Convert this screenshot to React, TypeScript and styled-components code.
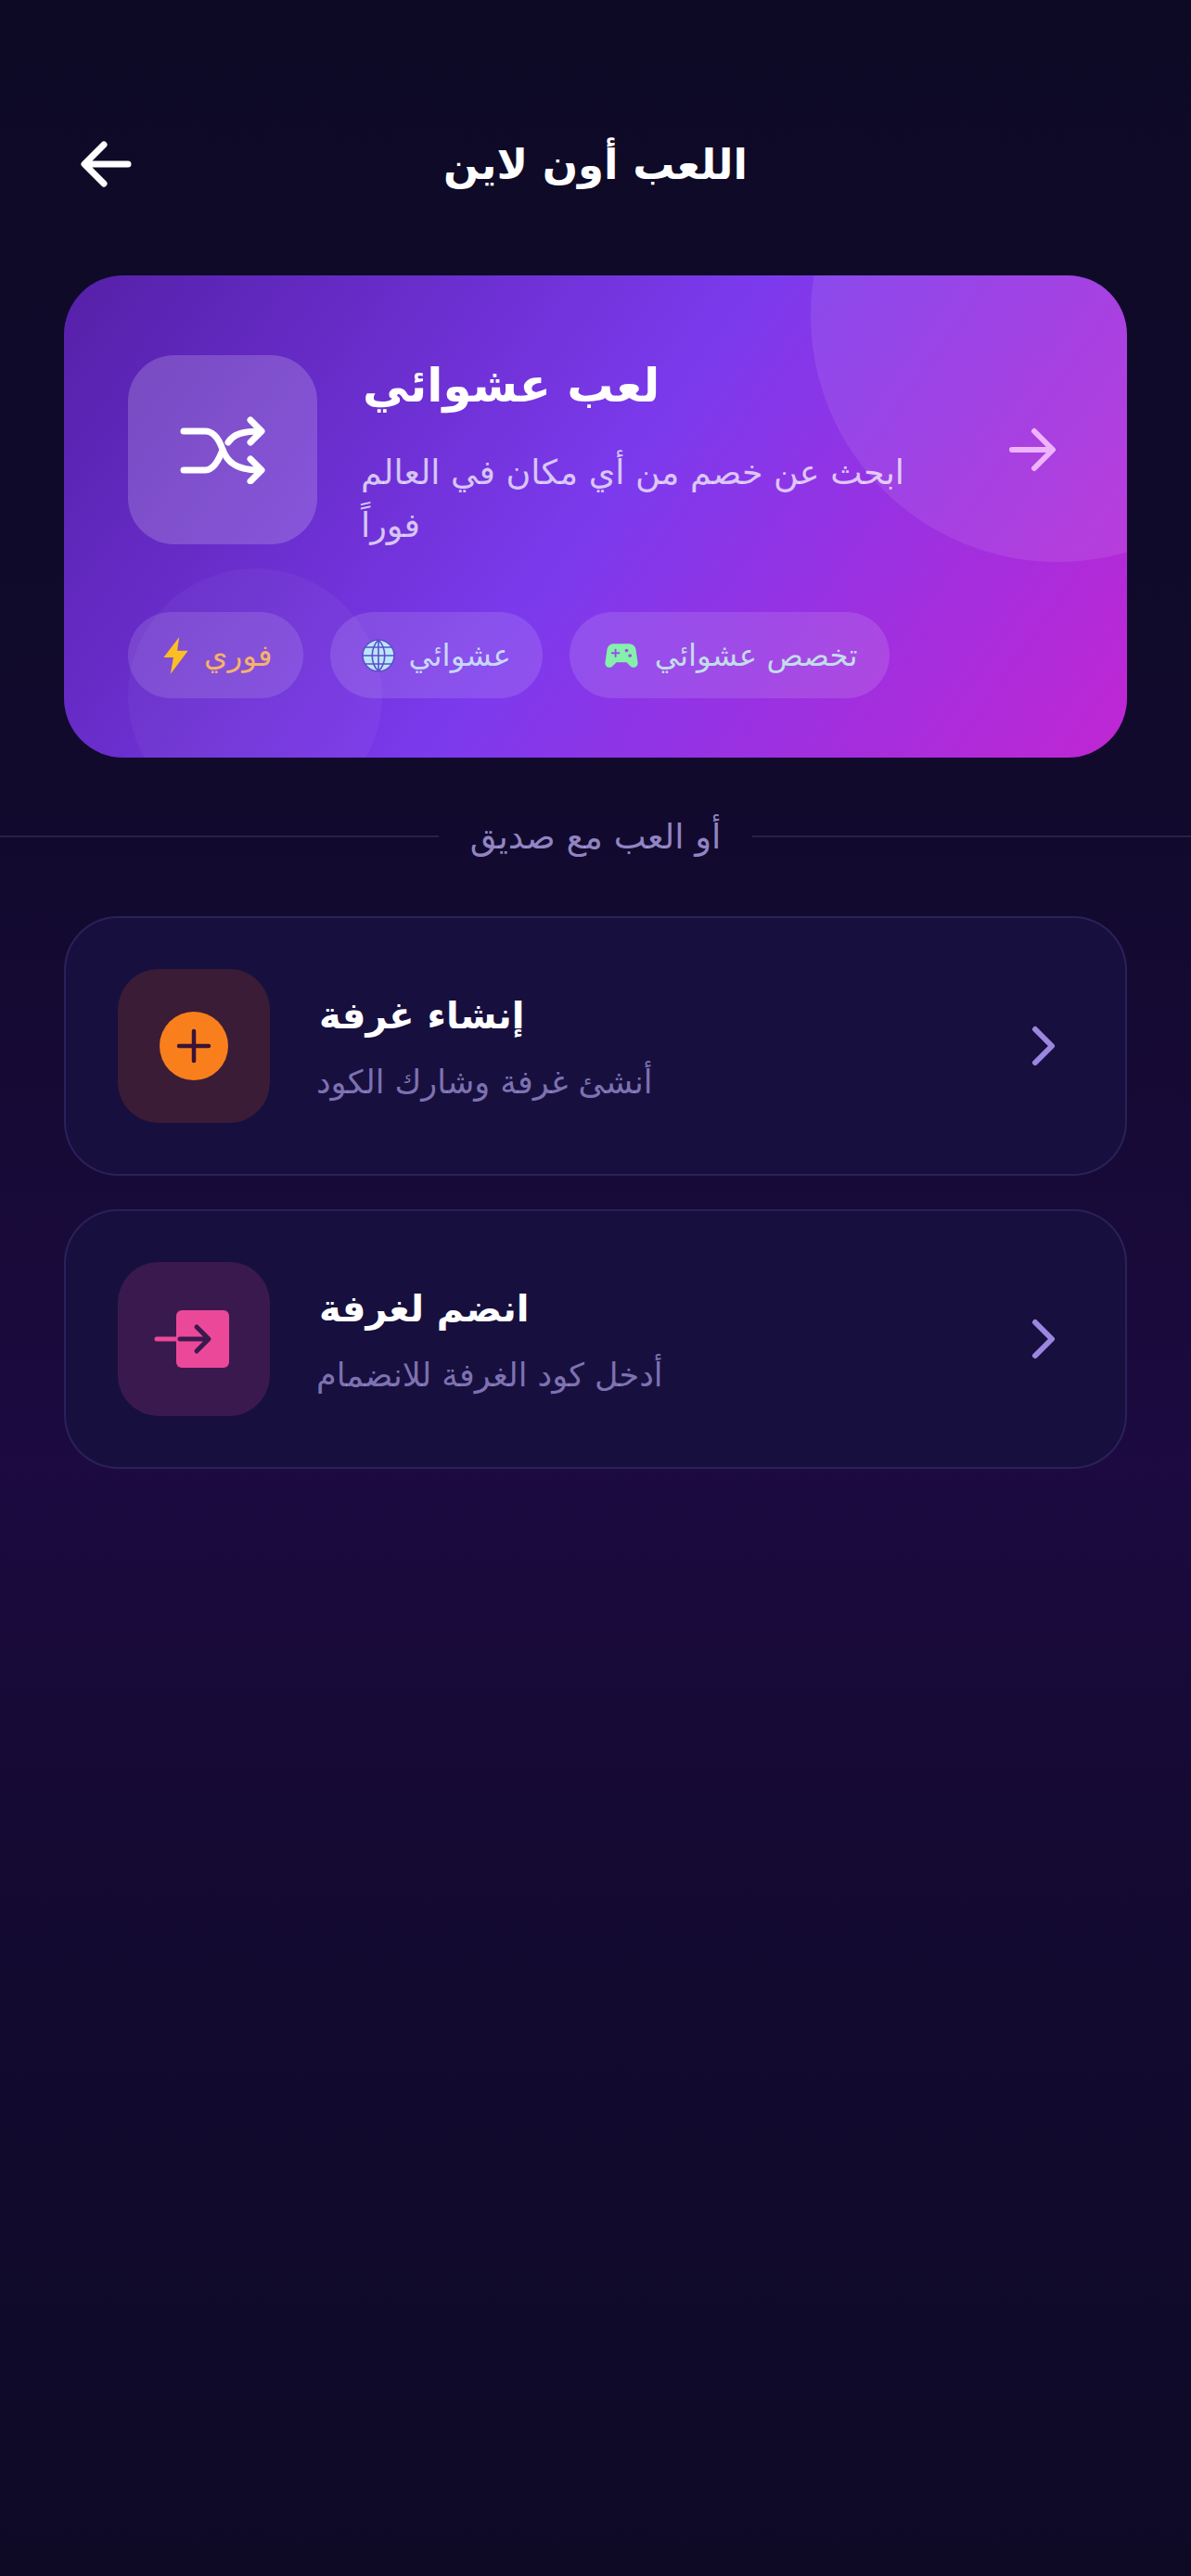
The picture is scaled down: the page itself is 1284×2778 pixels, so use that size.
import React from "react";
import styled, { createGlobalStyle } from "styled-components";
import { MdSportsEsports } from "react-icons/md";

const Global = createGlobalStyle`
  html, body { margin: 0; padding: 0; background: #0d0a24; }
  * { box-sizing: border-box; }
`;

const Page = styled.div`
  width: 1284px;
  height: 2778px;
  overflow: hidden;
  padding-top: 130px;
  background: linear-gradient(180deg, #0d0a26 0%, #110a2c 30%, #1c0a40 57%, #140a32 72%, #0e0a26 100%);
  font-family: "DejaVu Sans", "Noto Sans", sans-serif;
`;

const Header = styled.header`
  display: grid;
  grid-template-columns: 1fr auto 1fr;
  align-items: center;
  height: 94px;
  padding: 0 86px;
`;

const BackIcon = styled.svg`
  width: 56px;
  height: 52px;
  display: block;
`;

const Title = styled.h1`
  margin: 0;
  color: #fff;
  font-size: 45px;
  font-weight: 700;
  direction: rtl;
`;

const Hero = styled.section`
  position: relative;
  overflow: hidden;
  margin: 73px 69px 0;
  height: 520px;
  padding: 86px 69px 0;
  border-radius: 64px;
  background: linear-gradient(125deg, #5520a8 0%, #7c3aed 50%, #c026d3 100%);
`;

const Bubble = styled.div<{ $size: number; $top: number; $left: number; $alpha: number }>`
  position: absolute;
  top: ${(p) => p.$top}px;
  left: ${(p) => p.$left}px;
  width: ${(p) => p.$size}px;
  height: ${(p) => p.$size}px;
  border-radius: 50%;
  background: rgba(255, 255, 255, ${(p) => p.$alpha});
`;

const HeroTop = styled.div`
  position: relative;
  display: flex;
  align-items: flex-start;
  height: 277px;
`;

const HeroIconBox = styled.div`
  flex: none;
  width: 204px;
  height: 204px;
  border-radius: 50px;
  background: rgba(255, 255, 255, 0.18);
  display: flex;
  align-items: center;
  justify-content: center;
`;

const HeroText = styled.div`
  margin-left: 47px;
  width: 590px;
`;

const HeroTitle = styled.h2`
  margin: 0 0 0 2px;
  width: max-content;
  height: 66px;
  line-height: 66px;
  color: #fff;
  font-size: 50px;
  font-weight: 700;
  white-space: nowrap;
  direction: rtl;
`;

const HeroSub = styled.p`
  margin: 32px 0 0;
  color: rgba(255, 255, 255, 0.72);
  font-size: 36.5px;
  line-height: 57px;
  direction: rtl;
  text-align: left;
`;

const HeroArrow = styled.svg`
  position: absolute;
  right: 7px;
  top: 76px;
  width: 52px;
  height: 52px;
`;

const Chips = styled.div`
  position: relative;
  display: flex;
  gap: 29px;
`;

const Chip = styled.div`
  height: 93px;
  padding: 0 34px;
  border-radius: 47px;
  background: rgba(255, 255, 255, 0.12);
  display: flex;
  align-items: center;
  gap: 14px;
`;

const ChipLabel = styled.span<{ $color: string }>`
  color: ${(p) => p.$color};
  font-size: 32.5px;
  direction: rtl;
`;

const Divider = styled.div`
  display: flex;
  align-items: center;
  margin-top: 60px;
  height: 50px;
  gap: 34px;
`;

const Rule = styled.div`
  flex: 1;
  height: 2px;
  background: rgba(255, 255, 255, 0.1);
`;

const DividerLabel = styled.span`
  color: rgba(196, 181, 253, 0.72);
  font-size: 37px;
  direction: rtl;
`;

const List = styled.div`
  margin: 61px 69px 0;
  display: flex;
  flex-direction: column;
  gap: 36px;
`;

const Row = styled.div`
  height: 280px;
  display: flex;
  align-items: center;
  padding: 0 71px 0 56px;
  border-radius: 58px;
  background: #17103f;
  border: 2px solid rgba(167, 139, 250, 0.14);
`;

const RowIconBox = styled.div<{ $bg: string }>`
  flex: none;
  width: 164px;
  height: 166px;
  border-radius: 44px;
  background: ${(p) => p.$bg};
  display: flex;
  align-items: center;
  justify-content: center;
`;

const RowText = styled.div`
  flex: 1;
  margin-left: 50px;
  display: flex;
  flex-direction: column;
  align-items: flex-start;
`;

const RowTitle = styled.div`
  color: #fff;
  font-size: 40px;
  font-weight: 700;
  line-height: 60px;
  margin-left: 3px;
  direction: rtl;
`;

const RowSub = styled.div`
  margin-top: 17px;
  color: rgba(196, 181, 253, 0.62);
  font-size: 35px;
  line-height: 50px;
  direction: rtl;
`;

const Chevron = styled.svg`
  flex: none;
  width: 34px;
  height: 44px;
`;

const PinkIcon = styled.svg`
  width: 84px;
  height: 64px;
  margin-right: 6px;
`;

export default function App() {
  return (
    <Page>
      <Global />
      <Header>
        <BackIcon viewBox="0 0 56 52" fill="none" stroke="#fff" strokeWidth="7" strokeLinecap="round" strokeLinejoin="round">
          <path d="M6 26H52M26 5L5 26L26 47" />
        </BackIcon>
        <Title>اللعب أون لاين</Title>
        <span />
      </Header>

      <Hero>
        <Bubble $size={532} $top={-223} $left={805} $alpha={0.085} />
        <Bubble $size={274} $top={316} $left={69} $alpha={0.04} />
        <HeroTop>
          <HeroIconBox>
            <svg width="92" height="74" viewBox="0 0 92 74" fill="none" stroke="#fff" strokeWidth="7" strokeLinecap="round" strokeLinejoin="round">
              <path d="M4 17H27C38 17 43 28 46 37C51 50 60 59 87 59" />
              <path d="M4 59H27C36 59 42 48 46 37" />
              <path d="M52 29C58 20 68 17 87 17" />
              <path d="M76 5L88 17L76 29M76 47L88 59L76 71" />
            </svg>
          </HeroIconBox>
          <HeroText>
            <HeroTitle>لعب عشوائي</HeroTitle>
            <HeroSub>ابحث عن خصم من أي مكان في العالم فوراً</HeroSub>
          </HeroText>
          <HeroArrow viewBox="0 0 52 52" fill="none" stroke="#eeb4fb" strokeWidth="6" strokeLinecap="round" strokeLinejoin="round">
            <path d="M4 26H47M28 6L48 26L28 46" />
          </HeroArrow>
        </HeroTop>
        <Chips>
          <Chip>
            <svg width="34" height="40" viewBox="0 0 30 38" fill="#fbbf24">
              <path d="M19 0L3 21H13L10 38L28 14H17Z" />
            </svg>
            <ChipLabel $color="#f6b26b">فوري</ChipLabel>
          </Chip>
          <Chip>
            <svg width="36" height="36" viewBox="0 0 36 36" fill="#bae6fd" stroke="#5b4fc9" strokeWidth="1.6">
              <circle cx="18" cy="18" r="17" />
              <path fill="none" d="M1 18H35M4 9H32M4 27H32M18 1V35M18 1C9 10 9 26 18 35M18 1C27 10 27 26 18 35" />
            </svg>
            <ChipLabel $color="#c7d7fb">عشوائي</ChipLabel>
          </Chip>
          <Chip>
            <MdSportsEsports size={44} color="#86efac" />
            <ChipLabel $color="#c3dcec">تخصص عشوائي</ChipLabel>
          </Chip>
        </Chips>
      </Hero>

      <Divider>
        <Rule />
        <DividerLabel>أو العب مع صديق</DividerLabel>
        <Rule />
      </Divider>

      <List>
        <Row>
          <RowIconBox $bg="#3a1c36">
            <svg width="76" height="76" viewBox="0 0 76 76">
              <circle cx="38" cy="38" r="37" fill="#f97f1c" />
              <path d="M38 22V54M22 38H54" fill="none" stroke="#3a1436" strokeWidth="4.5" strokeLinecap="round" />
            </svg>
          </RowIconBox>
          <RowText>
            <RowTitle>إنشاء غرفة</RowTitle>
            <RowSub>أنشئ غرفة وشارك الكود</RowSub>
          </RowText>
          <Chevron viewBox="0 0 34 44" fill="none" stroke="#9b87e0" strokeWidth="6" strokeLinecap="round" strokeLinejoin="round">
            <path d="M8 4L26 22L8 40" />
          </Chevron>
        </Row>
        <Row>
          <RowIconBox $bg="#3a1a4e">
            <PinkIcon viewBox="0 0 84 64">
              <rect x="26" y="1" width="57" height="62" rx="6" fill="#ec4899" />
              <path d="M5 32H30" fill="none" stroke="#ec4899" strokeWidth="5" strokeLinecap="round" />
              <path d="M30 32H60M48 19L61 32L48 45" fill="none" stroke="#3a1a4e" strokeWidth="5" strokeLinecap="round" strokeLinejoin="round" />
            </PinkIcon>
          </RowIconBox>
          <RowText>
            <RowTitle>انضم لغرفة</RowTitle>
            <RowSub>أدخل كود الغرفة للانضمام</RowSub>
          </RowText>
          <Chevron viewBox="0 0 34 44" fill="none" stroke="#9b87e0" strokeWidth="6" strokeLinecap="round" strokeLinejoin="round">
            <path d="M8 4L26 22L8 40" />
          </Chevron>
        </Row>
      </List>
    </Page>
  );
}
